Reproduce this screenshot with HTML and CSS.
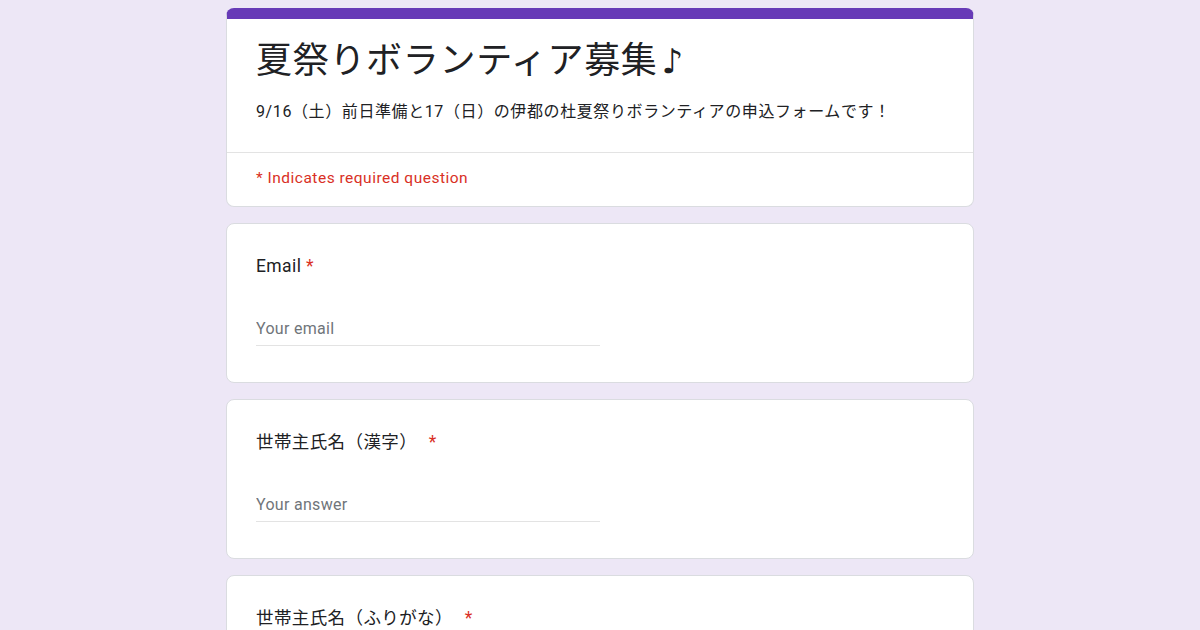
FILE: index.html
```html
<!DOCTYPE html>
<html lang="ja">
<head>
    <meta charset="UTF-8">
    <meta name="viewport" content="width=device-width, initial-scale=1.0">
    <title>夏祭りボランティア募集♪</title>
    <link rel="stylesheet" href="styles.css">
</head>
<body>

    <div class="container">
        <div class="card header-card">
            <div class="header-top">
                <h1 class="form-title">夏祭りボランティア募集<span class="note">♪</span></h1>
                <p class="form-desc">9/16（土）前日準備と17（日）の伊都の杜夏祭りボランティアの申込フォームです！</p>
            </div>
            <div class="required-note">* Indicates required question</div>
        </div>

        <div class="card question">
            <label class="question-title" for="email">Email <span class="star">*</span></label>
            <input type="email" id="email" class="answer" placeholder="Your email">
        </div>

        <div class="card question">
            <label class="question-title" for="nameKanji">世帯主氏名（漢字） <span class="star wide">*</span></label>
            <input type="text" id="nameKanji" class="answer" placeholder="Your answer">
        </div>

        <div class="card question">
            <label class="question-title" for="nameKana">世帯主氏名（ふりがな） <span class="star wide">*</span></label>
            <input type="text" id="nameKana" class="answer" placeholder="Your answer">
        </div>
    </div>

</body>
</html>
```

FILE: styles.css
```css
body {
    margin: 0;
    padding: 0;
    background-color: #ede7f6;
    font-family: Roboto, "Noto Sans CJK JP", sans-serif;
    color: #202124;
}
.container {
    width: 748px;
    margin: 0 auto;
    padding-top: 8px;
    display: flex;
    flex-direction: column;
    gap: 16px;
}
.card {
    background-color: white;
    border: 1px solid #dadce0;
    border-radius: 8px;
    box-sizing: border-box;
}
.header-card {
    border-top: 11px solid #673ab7;
}
.header-top {
    padding: 18px 29px 28px 29px;
    border-bottom: 1px solid #e3e3e3;
}
.form-title {
    margin: 0;
    font-size: 36px;
    line-height: 48px;
    font-weight: 400;
    letter-spacing: 0.7px;
}
.form-title .note {
    font-family: "DejaVu Sans", sans-serif;
    font-size: 34px;
    font-weight: bold;
    margin-left: 4px;
}
.form-desc {
    margin: 15px 0 0 0;
    font-size: 16px;
    line-height: 24px;
    letter-spacing: 0.6px;
}
.required-note {
    padding: 15px 29px 18px 29px;
    color: #d93025;
    font-size: 15.5px;
    line-height: 20px;
    letter-spacing: 0.5px;
}
.question {
    padding: 30px 29px 36px 29px;
    display: flex;
    flex-direction: column;
    align-items: flex-start;
}
.question-title {
    font-size: 17.5px;
    line-height: 24px;
    letter-spacing: 0.4px;
}
.star {
    color: #d93025;
}
.star.wide {
    margin-left: 7px;
}
.answer {
    margin-top: 39px;
    width: 50%;
    padding: 0 0 4px 0;
    border: none;
    border-bottom: 1px solid #e3e3e3;
    font-family: Roboto, "Noto Sans CJK JP", sans-serif;
    font-size: 16px;
    line-height: 24px;
    letter-spacing: 0.3px;
    outline: none;
    background: transparent;
}
.answer::placeholder {
    color: #70757a;
}
```
